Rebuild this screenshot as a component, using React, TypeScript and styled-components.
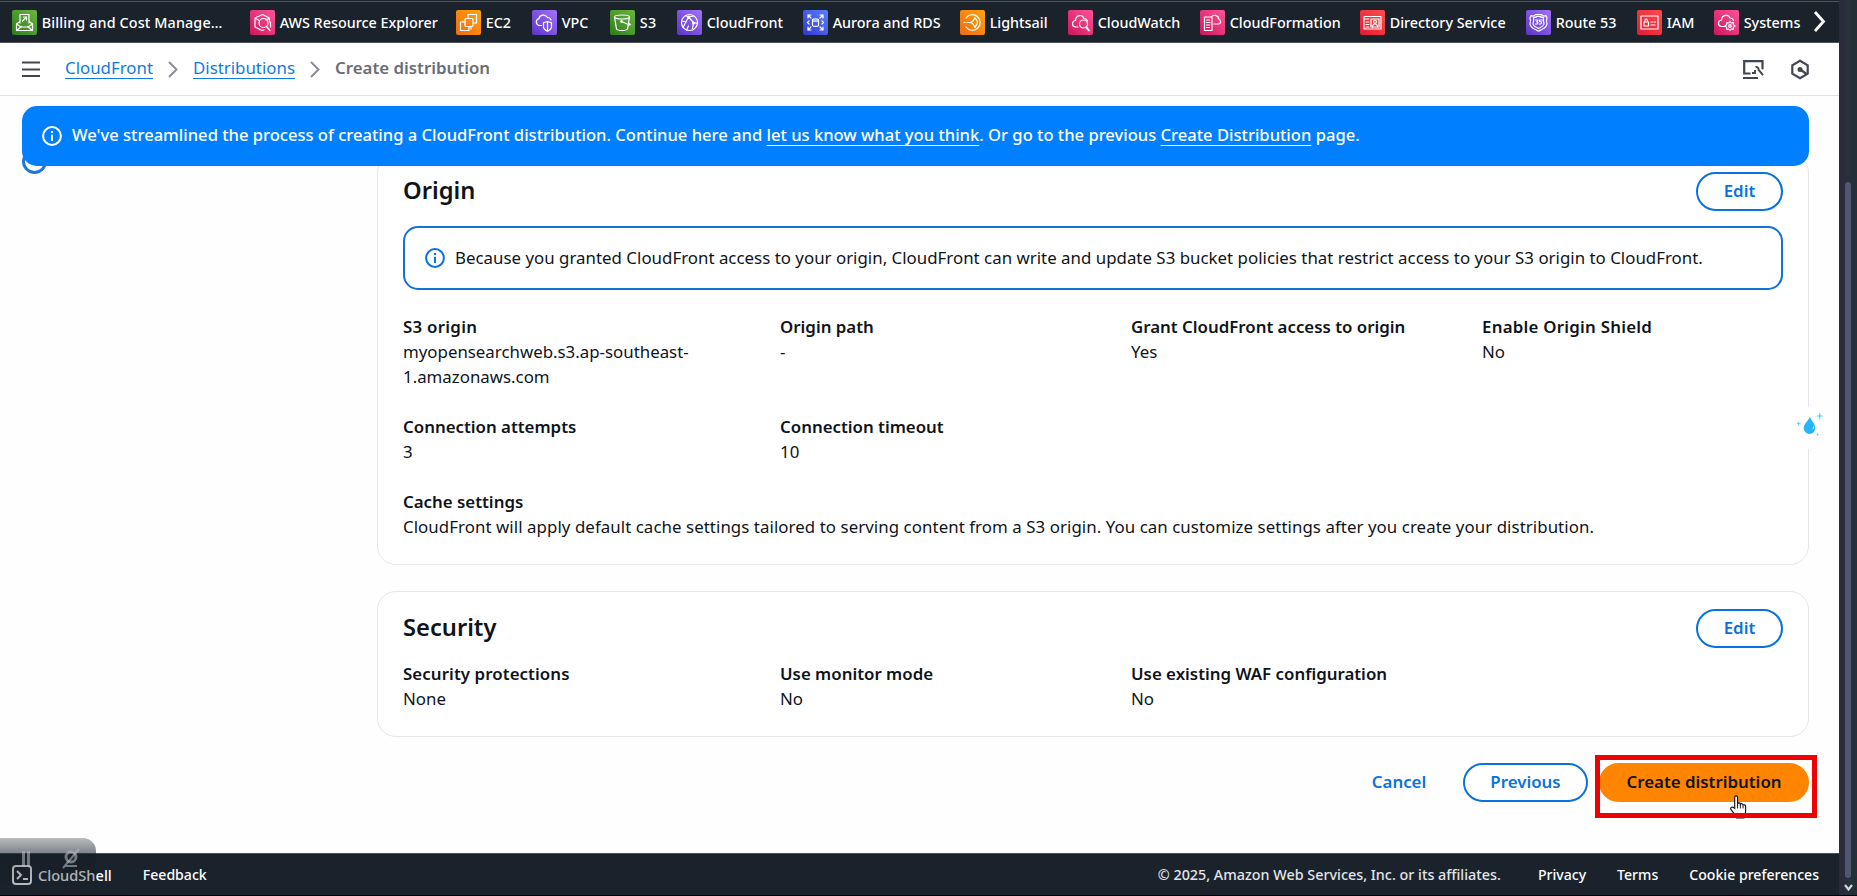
import React from "react";
import styled, { createGlobalStyle, css } from "styled-components";

const GlobalStyle = createGlobalStyle`
  * { box-sizing: border-box; }
  html, body { margin: 0; padding: 0; overflow: hidden; background: #000; }
  body {
    font-family: "Noto Sans", "Open Sans", sans-serif;
    font-size: 16.85px;
    line-height: 25px;
    color: #0f141a;
  }
`;

const BLUE = "#0972e0";
const DARK = "#1a222c";

const Screen = styled.div`
  position: relative;
  display: flex;
  width: 1857px;
  height: 896px;
  padding-bottom: 1px;
  overflow: hidden;
`;

const Console = styled.div`
  display: flex;
  flex-direction: column;
  width: 1839px;
  background: #fefefe;
`;

/* ---------- favourites bar ---------- */

const ServiceBar = styled.nav`
  display: flex;
  align-items: center;
  flex: none;
  height: 43px;
  padding: 1px 0 0 12px;
  background: ${DARK};
  border-top: 1px solid #1a222c;
  border-bottom: 1px solid #50505c;
  box-shadow: inset 0 1px 0 #4e5563;
`;

const Service = styled.a<{ $width: number; $tracking?: number }>`
  display: flex;
  align-items: center;
  flex: none;
  gap: 4.7px;
  width: ${(p) => p.$width}px;
  letter-spacing: ${(p) => p.$tracking ?? 0}px;
  color: #fff;
  font-size: 14.35px;
  font-weight: 500;
  line-height: 20px;
  white-space: nowrap;
`;

const ServiceName = styled.span`
  padding-top: 2px;
`;

const tileColors = {
  green: ["#2d7d1d", "#6cb63f"],
  pink: ["#cf1561", "#ff5493"],
  orange: ["#ef6a12", "#ffa40f"],
  purple: ["#5c35c6", "#a272fb"],
  indigo: ["#3338cf", "#5a80fb"],
  red: ["#e01c33", "#ff4c4c"],
};

const Tile = styled.span<{ $tone: keyof typeof tileColors }>`
  display: flex;
  flex: none;
  width: 25px;
  height: 25px;
  border-radius: 2px;
  background: linear-gradient(
    45deg,
    ${(p) => tileColors[p.$tone][0]},
    ${(p) => tileColors[p.$tone][1]}
  );
`;

const TileGlyph = styled.svg`
  width: 25px;
  height: 25px;
  fill: none;
  stroke: #fff;
  stroke-width: 1.2;
  stroke-linejoin: round;
  stroke-linecap: round;
`;

const ScrollNext = styled.svg`
  flex: none;
  width: 13px;
  height: 21px;
  margin: -2px 0 0 0;
  fill: none;
  stroke: #fff;
  stroke-width: 2.8;
`;

/* ---------- breadcrumb bar ---------- */

const CrumbBar = styled.header`
  display: flex;
  align-items: center;
  flex: none;
  height: 53px;
  padding: 0 30px 4px 22px;
  background: #fff;
  border-bottom: 1px solid #e2e2e6;
`;

const Hamburger = styled.svg`
  width: 18px;
  height: 17px;
  margin: 5px 25px 0 0;
  stroke: #424650;
  stroke-width: 2.2;
`;

const Link = styled.a<{ $light?: boolean }>`
  color: ${(p) => (p.$light ? "#fff" : "#0f7be0")};
  text-decoration: underline;
  text-decoration-thickness: 1px;
  text-underline-offset: 4px;
  text-decoration-skip-ink: none;
`;

const CrumbChevron = styled.svg`
  width: 10px;
  height: 17px;
  margin: 5px 15px 0;
  fill: none;
  stroke: #8c8c94;
  stroke-width: 2;
`;

const CurrentCrumb = styled.span`
  color: #6b6d76;
  font-weight: 600;
`;

const CrumbTools = styled.div`
  display: flex;
  gap: 27px;
  margin: 5px 0 0 auto;
`;

const ToolIcon = styled.svg`
  height: 21px;
  fill: none;
  stroke: #424650;
  stroke-width: 2.2;
`;

/* ---------- page ---------- */

const Page = styled.main`
  position: relative;
  flex: 1;
  padding: 10px 30px 0 22px;
`;

const Banner = styled.div`
  position: relative;
  z-index: 2;
  display: flex;
  align-items: center;
  gap: 10px;
  height: 60px;
  padding: 0 20px 4px;
  border-radius: 15px;
  background: #007fff;
  color: #fff;
  font-size: 16.57px;
  font-weight: 500;
  white-space: nowrap;
`;

const BannerText = styled.span`
  white-space: pre;
`;

const InfoGlyph = styled.svg<{ $drop?: number }>`
  flex: none;
  width: 20px;
  height: 20px;
  margin-top: ${(p) => p.$drop ?? 2}px;
  fill: none;
  stroke: currentColor;
  stroke-width: 2;
`;

const Columns = styled.div`
  display: flex;
  gap: 330px;
  margin-top: -12px;
`;

const StepMarker = styled.div`
  width: 25px;
  height: 25px;
  margin-top: -5px;
  border: 3px solid #1a78dc;
  border-radius: 50%;
`;

const Steps = styled.div`
  flex: 1;
  min-width: 0;
`;

const Card = styled.section`
  margin-bottom: 26px;
  padding: 17px 25px 25px;
  border: 1px solid #e6e6e8;
  border-radius: 19px;
  background: #fff;
`;

const CardHeader = styled.div`
  display: flex;
  align-items: center;
  justify-content: space-between;
  height: 39px;
  margin-bottom: 13px;
`;

const Heading = styled.h2`
  margin: -4px 0 0;
  font-size: 23.7px;
  font-weight: 600;
  line-height: 30px;
`;

const Button = styled.button<{ $kind?: "outline" | "plain" | "primary"; $width: number }>`
  flex: none;
  width: ${(p) => p.$width}px;
  height: 39px;
  padding: 0 0 2px;
  border: 2px solid ${BLUE};
  border-radius: 20px;
  background: #fff;
  color: ${BLUE};
  font: 600 16.85px/25px "Noto Sans", "Open Sans", sans-serif;
  ${(p) =>
    p.$kind === "plain" &&
    css`
      border-color: transparent;
      background: transparent;
    `}
  ${(p) =>
    p.$kind === "primary" &&
    css`
      border-color: #ff8400;
      background: #ff8400;
      color: #0f141a;
    `}
`;

const Alert = styled.div`
  display: flex;
  align-items: center;
  gap: 10px;
  height: 64px;
  margin: 15px 0 24px;
  padding: 0 20px 2px;
  border: 2px solid #1273d6;
  border-radius: 15px;
  letter-spacing: 0.015px;
  white-space: nowrap;
`;

const AlertIcon = styled(InfoGlyph)`
  color: ${BLUE};
`;

const Fields = styled.dl`
  display: grid;
  grid-template-columns: 377px 351px 351px 1fr;
  row-gap: 25px;
  margin: 0;
`;

const Field = styled.div<{ $wide?: boolean }>`
  ${(p) => p.$wide && "grid-column: 1 / -1;"}
`;

const Term = styled.dt<{ $tracking?: number }>`
  font-weight: 600;
  letter-spacing: ${(p) => p.$tracking ?? 0}px;
`;

const Value = styled.dd<{ $tracking?: number }>`
  margin: 0;
  white-space: pre-line;
  letter-spacing: ${(p) => p.$tracking ?? 0}px;
`;

const Actions = styled.div`
  display: flex;
  justify-content: flex-end;
  align-items: center;
`;

const PreviousSlot = styled.div`
  display: flex;
  margin: 0 11px 0 16px;
`;

const PrimarySlot = styled.div`
  position: relative;
`;

const Highlight = styled.div`
  position: absolute;
  left: -4px;
  top: -8px;
  width: 222px;
  height: 63px;
  border: 5px solid #ed0303;
`;

const Pointer = styled.svg`
  position: absolute;
  left: 130px;
  top: 32px;
  width: 19px;
  height: 24px;
`;

const Assistant = styled.div`
  position: absolute;
  z-index: 1;
  left: 1788px;
  top: 311px;
  width: 42px;
  height: 42px;
  border-radius: 50%;
  background: #fff;
`;

/* ---------- footer ---------- */

const Footer = styled.footer`
  display: flex;
  align-items: center;
  flex: none;
  height: 42px;
  padding: 0 20px 0 12px;
  border-top: 1px solid #4a515b;
  background: ${DARK};
  color: #fff;
  font-size: 14.1px;
  font-weight: 500;
  line-height: 20px;
`;

const ShellIcon = styled.svg`
  width: 20px;
  height: 20px;
  margin: 1px 6px 0 0;
  fill: none;
  stroke: #fff;
  stroke-width: 2;
`;

const ShellLabel = styled.a`
  font-size: 14.6px;
`;

const FooterLink = styled.a<{ $gap?: number }>`
  margin-left: ${(p) => p.$gap ?? 0}px;
`;

const Copyright = styled.span`
  margin-left: auto;
  color: #e3e5e8;
  font-size: 14.33px;
`;

const Recorder = styled.div`
  position: absolute;
  left: 0;
  top: 838px;
  width: 96px;
  height: 48px;
  border-radius: 0 13px 0 0;
  background: linear-gradient(rgba(40, 48, 54, 0.32), rgba(36, 44, 51, 0.58) 15px, rgba(18, 25, 33, 0.42) 16px, rgba(22, 30, 38, 0.3));
`;

const RecorderGlyphs = styled.svg`
  width: 96px;
  height: 48px;
  fill: none;
  stroke: rgba(190, 194, 198, 0.55);
`;

/* ---------- scrollbar ---------- */

const Gutter = styled.div`
  display: flex;
  flex-direction: column;
  align-items: center;
  width: 18px;
  padding: 182px 0 3px;
  background: linear-gradient(90deg, #2a2c3b 0 6px, #28303b 6px 12px, #242f38 12px);
`;

const Thumb = styled.div`
  flex: 1;
  width: 6px;
  margin-bottom: 5px;
  border-radius: 3px;
  background: #54566f;
`;

const ScrollDown = styled.svg`
  width: 9px;
  height: 9px;
  fill: none;
  stroke: #d5d7df;
  stroke-width: 2.2;
`;

const glyphs: Record<string, React.ReactNode> = {
  billing: (
    <path d="M8 13V4.500h9V13M8 11.500l-3.500 2.500v6.500h16V14L17 11.500M4.500 14l4.500 3h7l4.500-3M4.500 20.500l5-4M20.500 20.500l-5-4M10.500 11l4-4M11.500 7h3v3" />
  ),
  explorer: (
    <>
      <path d="M19.500 12V8L12.500 4.500 5 8v9l7 3.500 2-.8M5 8l4 2.500M19.500 8l-3.500 2" />
      <circle cx="13.500" cy="13" r="4.500" />
      <path d="m16.500 16.500 3.500 4M20.500 12v5" />
    </>
  ),
  ec2: (
    <>
      <rect x="9" y="8.500" width="8" height="8" rx="1" />
      <path d="M12 8V4.500h8.500V13H17.500M9 12H4.500v8.500H13V17M7 12v-1M15 19v-2" />
    </>
  ),
  vpc: (
    <>
      <path d="M9.500 15.500H7a3.500 3.500 0 0 1 0-6.800C7.500 5 13 3.500 15.500 7.500c2 0 3 .8 3.500 2.500" />
      <path d="m15.500 11.500 4 1.300v4c0 2-2 3.500-4 4.500-2-1-4-2.500-4-4.500v-4zM15.500 12v9" />
    </>
  ),
  s3: (
    <>
      <ellipse cx="12" cy="7" rx="7.500" ry="2" />
      <path d="M4.500 7 6.500 19c1.500 2 9.500 2 11 0l2-12M11.500 11.500l8 3.500c1.500-.2 1-1-1-1.800" />
      <circle cx="11.500" cy="11.500" r=".8" />
    </>
  ),
  cloudfront: (
    <>
      <circle cx="12.500" cy="12.500" r="8" />
      <path d="M6 17.500 11.500 7l5 5.500-1 6M8.500 5.500 11.500 7l5-1M5 11l4 1M17 12.500l3.500 1M9.500 20l2-4" />
      <circle cx="11.800" cy="7.200" r="1" />
      <circle cx="16.500" cy="13" r="1" />
    </>
  ),
  rds: (
    <>
      <path d="M5 8V5h3M5 5l3 3M17 5h3v3M20 5l-3 3M5 17v3h3M5 20l3-3M20 17v3h-3M20 20l-3-3M6 11l-1.500 1.500L6 14M19 11l1.500 1.500L19 14" />
      <ellipse cx="12.500" cy="10" rx="3" ry="1.200" />
      <path d="M9.500 10v5.500c1 1.300 5 1.300 6 0V10" />
    </>
  ),
  lightsail: (
    <>
      <path d="M6 8a7.800 7.800 0 1 1 0 9M4 12.500h1M7 12.500h3.500" />
      <path d="M15 7.500c-1 3-2 4-4 5 2 1 3 2 4 5 1-2 2.500-4 2.500-5S16 9 15 7.500z" />
    </>
  ),
  cloudwatch: (
    <>
      <path d="M10 17H7.500c-4-.5-4-6 0-6.500C8 4.500 14.500 4 16 8.500c2 0 3 1 3.500 2.500" />
      <circle cx="15.500" cy="14" r="4" />
      <path d="m18.300 17 2.500 3.500" strokeWidth="2" />
    </>
  ),
  cloudformation: (
    <>
      <path d="M4.500 7h7.500v13.500H4.500zM6.500 10h3M6.500 12.500h3.500M6.500 15h3M6.500 17.500h3" />
      <path d="M14 14h4.500c3-.5 2.500-4 .5-4.500C18.500 5 13 4 11.500 7" />
    </>
  ),
  directory: (
    <>
      <rect x="4" y="6.500" width="17" height="12.500" />
      <rect x="11" y="9" width="8" height="8" />
      <circle cx="15" cy="11.800" r="1.500" />
      <path d="M12.500 17c0-4 5-4 5 0M4 9h5M6 12h3M6 14.500h3M6 17h3" />
    </>
  ),
  route53: (
    <path d="M5 5.500c2 1 3.500.5 4.500-.8h6c1 1.300 2.500 1.800 4.500.8l1 2.500c-1 2-.5 4 0 6-.5 4-4 5-8.500 7-4.500-2-8-3-8.500-7 .5-2 1-4 0-6zM7.500 7.500c1.500 0 2.500 0 3.500-1h3c1 1 2 1 3.500 1-.5 2.500 0 4.500.5 6.500-.5 2.500-2.500 3-5.500 4.500-3-1.500-5-2-5.500-4.500.5-2 1-4 .5-6.500zM9.500 10H12l-1.200 1.800c1.700.2 1.500 2.700-1.300 2.200M16 10h-2.500v1.500c3-.3 2.500 3-.2 2.500" />
  ),
  iam: (
    <>
      <rect x="4" y="6" width="17" height="13" />
      <path d="M7 12h4.500v4H7zM8 12v-1.500c0-2 2.500-2 2.500 0V12M14 12h1.500M17 12h1.500M14 15h4" />
    </>
  ),
  systems: (
    <>
      <path d="M10.500 16.500H7.500c-4-.5-4-6 0-6.500C8 4.500 14.500 4 16 8c2 0 3 1 3.500 2.500" />
      <circle cx="16" cy="16" r="1.300" />
      <path d="m16 11.500 1.200 1.500 2-.3.200 2 1.600 1.300-1.600 1.300-.2 2-2-.3L16 20.500 14.800 19l-2 .3-.2-2L11 16l1.600-1.300.2-2 2 .3z" />
    </>
  ),
};

const services: [string, string, keyof typeof tileColors, number, number?][] = [
  ["Billing and Cost Manage…", "billing", "green", 238, 0.13],
  ["AWS Resource Explorer", "explorer", "pink", 206],
  ["EC2", "ec2", "orange", 76],
  ["VPC", "vpc", "purple", 78],
  ["S3", "s3", "green", 67, 0.3],
  ["CloudFront", "cloudfront", "purple", 126],
  ["Aurora and RDS", "rds", "indigo", 157],
  ["Lightsail", "lightsail", "orange", 108],
  ["CloudWatch", "cloudwatch", "pink", 132],
  ["CloudFormation", "cloudformation", "pink", 160],
  ["Directory Service", "directory", "red", 166],
  ["Route 53", "route53", "purple", 111],
  ["IAM", "iam", "red", 77],
  ["Systems", "systems", "pink", 99],
];

const originFields: [string, string, number?][] = [
  ["S3 origin", "myopensearchweb.s3.ap-southeast-\n1.amazonaws.com", 0.27],
  ["Origin path", "-"],
  ["Grant CloudFront access to origin", "Yes"],
  ["Enable Origin Shield", "No", 0.24],
  ["Connection attempts", "3"],
  ["Connection timeout", "10"],
];

const securityFields: [string, string, number?][] = [
  ["Security protections", "None", 0.08],
  ["Use monitor mode", "No"],
  ["Use existing WAF configuration", "No"],
];

const infoShape = (
  <>
    <circle cx="10" cy="10" r="8.900" />
    <path d="M10 8.800V15M10 5v2" />
  </>
);

const Chevron = () => (
  <CrumbChevron viewBox="0 0 10 17">
    <path d="M1 1l7.500 7.500L1 16" />
  </CrumbChevron>
);

const FieldList = ({
  items,
  children,
}: {
  items: [string, string, number?][];
  children?: React.ReactNode;
}) => (
  <Fields>
    {items.map(([term, value, tracking]) => (
      <Field key={term}>
        <Term $tracking={tracking}>{term}</Term>
        <Value>{value}</Value>
      </Field>
    ))}
    {children}
  </Fields>
);

export default function App() {
  return (
    <Screen>
      <GlobalStyle />
      <Console>
        <ServiceBar>
          {services.map(([name, glyph, tone, width, tracking]) => (
            <Service key={name} $width={width} $tracking={tracking}>
              <Tile $tone={tone}>
                <TileGlyph viewBox="0 0 25 25">{glyphs[glyph]}</TileGlyph>
              </Tile>
              <ServiceName>{name}</ServiceName>
            </Service>
          ))}
          <ScrollNext viewBox="0 0 13 21">
            <path d="M2 1l8.500 9.500L2 20" />
          </ScrollNext>
        </ServiceBar>

        <CrumbBar>
          <Hamburger viewBox="0 0 18 17">
            <path d="M0 1.500h18M0 8.500h18M0 15h18" />
          </Hamburger>
          <Link>CloudFront</Link>
          <Chevron />
          <Link>Distributions</Link>
          <Chevron />
          <CurrentCrumb>Create distribution</CurrentCrumb>
          <CrumbTools>
            <ToolIcon width="21" viewBox="0 0 21 21">
              <path d="M7.500 14.500H1.200V2.200h18.300v8M0 19h15" />
              <path d="M9 14h3v-3M12.500 8.200c1.500-.8 3.500.5 3 2.500l4.500 5.500" strokeWidth="1.900" />
            </ToolIcon>
            <ToolIcon width="18" viewBox="0 0 18 21">
              <path d="M9 1.800l7.700 4.500v8.400L9 19.200l-7.700-4.500V6.300z" />
              <circle cx="9" cy="10.500" r="1.400" fill="#424650" />
              <path d="M10 11l5.500 4" />
            </ToolIcon>
          </CrumbTools>
        </CrumbBar>

        <Page>
          <Banner>
            <InfoGlyph $drop={4} viewBox="0 0 20 20">{infoShape}</InfoGlyph>
            <BannerText>
              We've streamlined the process of creating a CloudFront distribution. Continue here and{" "}
              <Link $light>let us know what you think</Link>. Or go to the previous{" "}
              <Link $light>Create Distribution</Link> page.
            </BannerText>
          </Banner>

          <Columns>
            <StepMarker />
            <Steps>
              <Card>
                <CardHeader>
                  <Heading>Origin</Heading>
                  <Button $width={87}>Edit</Button>
                </CardHeader>
                <Alert>
                  <AlertIcon viewBox="0 0 20 20">{infoShape}</AlertIcon>
                  <span>
                    Because you granted CloudFront access to your origin, CloudFront can write and update S3 bucket
                    policies that restrict access to your S3 origin to CloudFront.
                  </span>
                </Alert>
                <FieldList items={originFields}>
                  <Field $wide>
                    <Term>Cache settings</Term>
                    <Value $tracking={0.063}>
                      CloudFront will apply default cache settings tailored to serving content from a S3 origin. You can
                      customize settings after you create your distribution.
                    </Value>
                  </Field>
                </FieldList>
              </Card>

              <Card>
                <CardHeader>
                  <Heading>Security</Heading>
                  <Button $width={87}>Edit</Button>
                </CardHeader>
                <FieldList items={securityFields} />
              </Card>

              <Actions>
                <Button $kind="plain" $width={96}>Cancel</Button>
                <PreviousSlot>
                  <Button $width={125}>Previous</Button>
                </PreviousSlot>
                <PrimarySlot>
                  <Button $kind="primary" $width={210}>Create distribution</Button>
                  <Pointer viewBox="0 0 20 25">
                    <path
                      d="M6 14V2.500C6 .3 9 .3 9 2.500V9c.5-1.300 3-1 3 .5.800-1 2.800-.5 2.800 1 .9-.8 2.700-.2 2.700 1.300V17c0 3-1.500 4-1.800 7H8C7.500 21 4.500 18.500 2 15c-1-2 1.500-3.500 4-1z"
                      fill="#fff"
                      stroke="#111"
                      strokeWidth="1.200"
                    />
                    <path d="M9 9v5M12 10v4M14.800 11v3" stroke="#111" />
                  </Pointer>
                  <Highlight />
                </PrimarySlot>
              </Actions>
            </Steps>
          </Columns>

          <Assistant>
            <svg width="42" height="42" viewBox="0 0 42 42" fill="#25b5fa">
              <path d="M22 9.500c1 4.500 5.300 7 5.300 11.700a5.800 5.800 0 0 1-11.600 0c0-4.700 4.800-7.200 6.300-11.700z" />
              <path d="M25.500 18.500c1.500 1 1 3.500-.800 4-.900-1 .8-2 .8-4z" fill="#b9ecff" />
              <path
                d="M31.800 5l.8 3.200 3.200.8-3.200.8-.8 3.700-.8-3.700-3.200-.8 3.200-.8zM10.700 14l.6 2 2 .6-2 .6-.6 2-.6-2-2-.6 2-.6zM29.500 25.500l.5 1.700 1.200.4-1.200.4-.5 1.500-.5-1.500-1-.4 1-.4z"
                fill="#55d3fb"
              />
            </svg>
          </Assistant>
        </Page>

        <Footer>
          <ShellIcon viewBox="0 0 20 20">
            <rect x="1" y="1" width="18" height="18" rx="3" />
            <path d="M5 6l4 4-4 4M11 14h5" />
          </ShellIcon>
          <ShellLabel>CloudShell</ShellLabel>
          <FooterLink $gap={31}>Feedback</FooterLink>
          <Copyright>© 2025, Amazon Web Services, Inc. or its affiliates.</Copyright>
          <FooterLink $gap={37}>Privacy</FooterLink>
          <FooterLink $gap={31}>Terms</FooterLink>
          <FooterLink $gap={31}>Cookie preferences</FooterLink>
        </Footer>
      </Console>

      <Gutter>
        <Thumb />
        <ScrollDown viewBox="0 0 9 9">
          <path d="M1 2l3.500 4.500L8 2" />
        </ScrollDown>
      </Gutter>

      <Recorder>
        <RecorderGlyphs viewBox="0 0 96 48">
          <path d="M23.500 13v16M28.500 13v16" strokeWidth="3" />
          <circle cx="71" cy="19" r="5" strokeWidth="3" />
          <path d="M65 28h12M63 30L79 11" strokeWidth="2" />
        </RecorderGlyphs>
      </Recorder>
    </Screen>
  );
}
